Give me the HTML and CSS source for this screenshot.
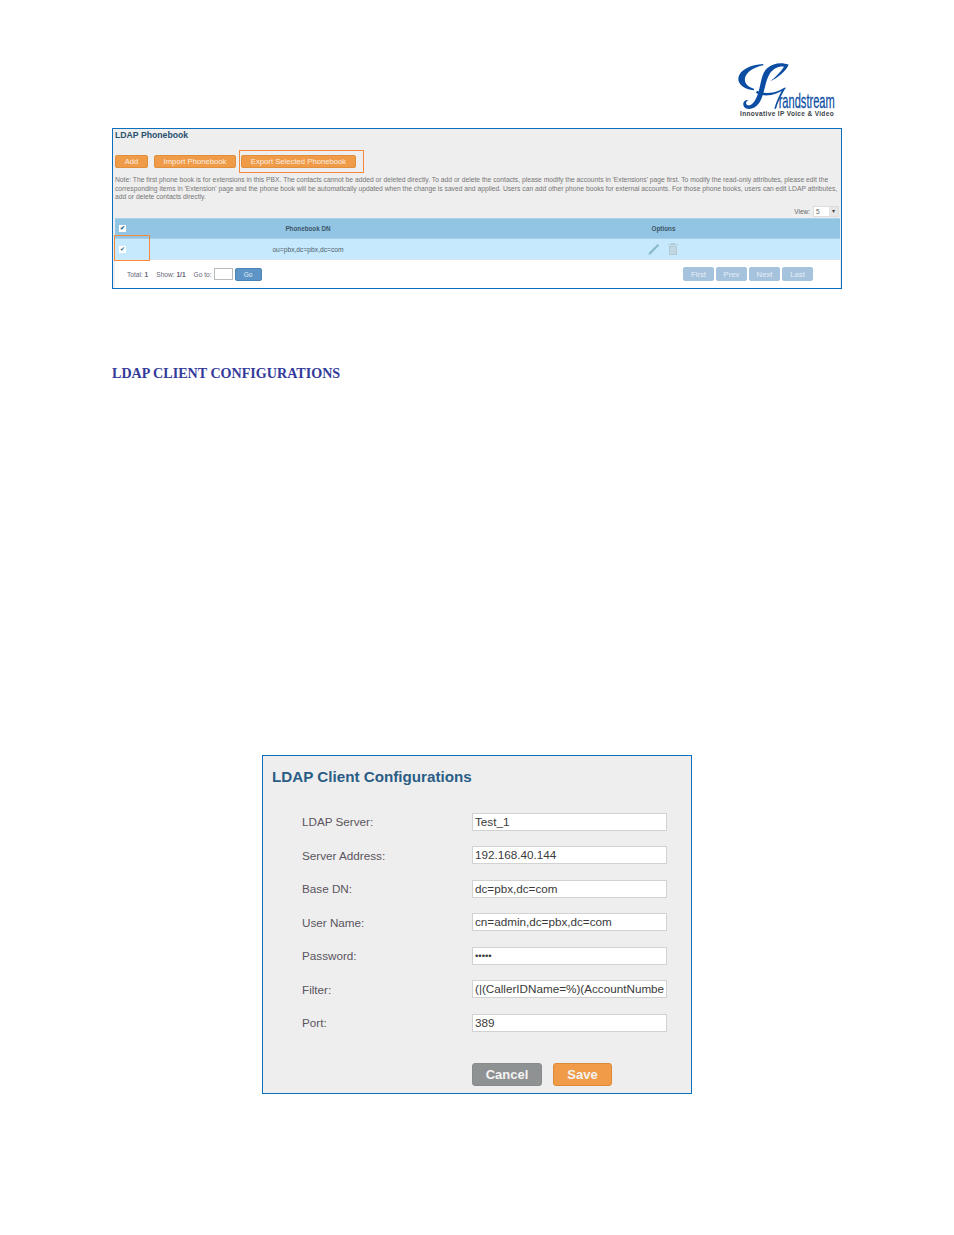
FILE: index.html
```html
<!DOCTYPE html>
<html lang="en">
<head>
<meta charset="utf-8">
<title>LDAP Client Configurations</title>
<link rel="stylesheet" href="styles.css">
</head>
<body>
<header class="top">
  <svg class="logo" viewBox="0 0 390 225" aria-label="Grandstream">
    <g fill="#0b4da2">
      <path d="M130 42C92 44 58 60 55 84C53 104 74 118 102 121L102 116C84 111 72 100 75 84C79 66 102 52 130 46Z"/>
      <path d="M206 44C186 36 160 38 142 54C122 72 124 104 113 134C106 152 96 168 84 166C76 164 76 154 86 150C72 148 66 160 72 170C82 182 104 178 118 158C134 134 134 96 150 70C160 56 176 48 192 50C182 66 166 82 150 94C172 84 196 66 206 44Z"/>
      <path d="M111 122C126 131 154 131 176 122C184 119 190 116 196 112L197 115C186 124 168 134 146 136C130 137 116 134 108 128Z"/>
      <path d="M188 116C178 136 168 156 163 176L168 176C173 156 184 136 196 114Z"/>
    </g>
    <text class="logo-word" transform="translate(176 174) scale(1.04 1.9)">randstream</text>
    <text class="logo-tag" x="60" y="198">Innovative IP Voice &amp; Video</text>
  </svg>
</header>

<section class="book">
  <h2 class="book-title">LDAP Phonebook</h2>
  <div class="book-actions">
    <button class="btn-o btn-add">Add</button>
    <button class="btn-o btn-import">Import Phonebook</button>
    <button class="btn-o btn-export">Export Selected Phonebook</button>
  </div>
  <p class="note">Note: The first phone book is for extensions in this PBX. The contacts cannot be added or deleted directly. To add or delete the contacts, please modify the accounts in 'Extensions' page first. To modify the read-only attributes, please edit the corresponding items in 'Extension' page and the phone book will be automatically updated when the change is saved and applied. Users can add other phone books for external accounts. For those phone books, users can edit LDAP attributes, add or delete contacts directly.</p>
  <div class="view-row">
    <span>View:</span>
    <span class="view-select"><span class="view-val">5</span><span class="view-arrow">▾</span></span>
  </div>
  <div class="tbl">
    <div class="tr th">
      <span class="c-check"><span class="check">✔</span></span>
      <span class="c-dn">Phonebook DN</span>
      <span class="c-opt">Options</span>
    </div>
    <div class="tr td">
      <span class="c-check"><span class="check">✔</span></span>
      <span class="c-dn">ou=pbx,dc=pbx,dc=com</span>
      <span class="c-opt icons">
        <svg class="ico" viewBox="0 0 14 14"><path d="M1.5 12.8L2 10.6L10.6 2L12.2 3.6L3.7 12.2Z" fill="#8dbcc9"/></svg>
        <svg class="ico" viewBox="0 0 14 14"><path d="M2 2.2H12V3.2H2ZM5 1H9V2.2H5ZM3 4H11V13H3Z" fill="#b2c9d3"/><path d="M5 5V12M7 5V12M9 5V12" stroke="#d8ecf5" stroke-width=".8"/></svg>
      </span>
    </div>
  </div>
  <div class="pager">
    <span>Total: <b>1</b></span>
    <span class="pg-show">Show: <b>1/1</b></span>
    <span class="pg-go">Go to:</span>
    <span class="pg-input"></span>
    <button class="btn-go">Go</button>
    <span class="pg-nav">
      <button class="btn-p">First</button>
      <button class="btn-p">Prev</button>
      <button class="btn-p">Next</button>
      <button class="btn-p">Last</button>
    </span>
  </div>
  <div class="mark mark-export"></div>
  <div class="mark mark-check"></div>
</section>

<h1 class="section-head">LDAP CLIENT CONFIGURATIONS</h1>

<section class="client">
  <h2 class="client-title">LDAP Client Configurations</h2>
  <div class="form">
    <label>LDAP Server:</label><input value="Test_1">
    <label>Server Address:</label><input value="192.168.40.144">
    <label>Base DN:</label><input value="dc=pbx,dc=com">
    <label>User Name:</label><input value="cn=admin,dc=pbx,dc=com">
    <label>Password:</label><input class="pw" type="password" value="12345">
    <label>Filter:</label><input value="(|(CallerIDName=%)(AccountNumber=%))">
    <label>Port:</label><input value="389">
  </div>
  <div class="client-actions">
    <button class="btn-l btn-cancel">Cancel</button>
    <button class="btn-l btn-save">Save</button>
  </div>
</section>
</body>
</html>
```
FILE: styles.css
```css
* { box-sizing: border-box; }
html, body { margin: 0; padding: 0; background: #fff; }
body { width: 954px; height: 1235px; overflow: hidden; font-family: "Liberation Sans", Arial, sans-serif; }
button { font-family: inherit; padding: 0; cursor: default; }

.top { height: 128px; display: flex; justify-content: flex-end; align-items: flex-start; padding: 50px 104px 0 0; }
.logo { width: 130px; height: 75px; display: block; }
.logo-word { font-family: "Liberation Sans", sans-serif; font-size: 32px; fill: #0b4da2; stroke: #0b4da2; stroke-width: .4px; }
.logo-tag { font-family: "Liberation Sans", sans-serif; font-size: 19.5px; font-weight: 700; fill: #3a3f48; letter-spacing: 1.05px; }

.book { position: relative; margin-left: 112px; width: 730px; height: 161px; border: 1.3px solid #0a70be; background: #eee; padding: 0 1px 0 2px; display: flex; flex-direction: column; }
.book-title { margin: 0; font-size: 8.7px; line-height: 11px; font-weight: 700; color: #27506f; height: 25px; padding-top: 1px; }
.book-actions { display: flex; gap: 6px; height: 12px; margin-top: 1px; }
.btn-o { height: 13px; border: 1px solid #e08f3c; border-radius: 2px; background: #f09b48; color: #fbeee0; font-size: 7.7px; line-height: 9px; }
.btn-add { width: 33px; }
.btn-import { width: 82px; }
.btn-export { width: 115px; margin-left: -1px; }
.note { margin: 9px 0 0; font-size: 6.72px; line-height: 8.5px; color: #777; height: 26px; width: 727px; word-spacing: .03px; }
.view-row { display: flex; justify-content: flex-end; align-items: center; gap: 3px; height: 12px; margin-top: 3px; padding-right: 1px; font-size: 6.5px; color: #666; }
.view-select { display: flex; width: 26px; height: 11px; background: #fff; border: 1px solid #ddd; }
.view-val { flex: 1; padding-left: 2px; line-height: 9px; }
.view-arrow { width: 9px; background: #e6e6e6; font-size: 6px; line-height: 9px; text-align: center; color: #444; }

.tbl { margin-top: 1px; width: 725px; }
.tr { display: flex; align-items: center; font-size: 6.7px; }
.th { height: 21px; background: #92c5e4; border-top: 1px solid #a9d2ea; border-bottom: 1px solid #a8cfe6; font-weight: 700; font-size: 6.3px; color: #3c5566; }
.td { height: 21px; background: #c7e9fd; border-bottom: 1px solid #d5e8f2; color: #4d5d68; }
.c-check { width: 4px; margin-left: 4px; flex: none; display: flex; }
.check { flex: none; width: 7px; height: 7px; background: #fff; color: #1f5f8e; font-size: 6px; line-height: 7px; text-align: center; }
.c-dn { width: 354px; margin-left: 8px; flex: none; text-align: center; }
.c-opt { width: 357px; flex: none; text-align: center; }
.icons { display: flex; justify-content: center; gap: 5px; }
.ico { width: 14px; height: 14px; display: block; }

.pager { flex: 1; margin: 0 -1px 0 0; width: 725px; background: #fff; display: flex; align-items: center; padding: 0 0 0 12px; font-size: 6.6px; color: #667; }
.pager b { font-weight: 700; }
.pg-show { margin-left: 8px; }
.pg-go { margin-left: 8px; }
.pg-input { width: 19px; height: 12px; margin-left: 2px; border: 1px solid #bbb; background: #fff; }
.btn-go { width: 27px; height: 13px; margin-left: 2px; border: 1px solid #4c86b8; border-radius: 2px; background: #5c95c6; color: #e4eef7; font-size: 6.5px; }
.pg-nav { margin-left: auto; margin-right: 27px; display: flex; gap: 2px; }
.btn-p { width: 31px; height: 14px; border: 1px solid #a6c3de; border-radius: 2px; background: #a6c3de; color: #e6eef6; font-size: 7.7px; }

.mark { position: absolute; border: 1.8px solid #f5893c; }
.mark-export { left: 125.5px; top: 21px; width: 125px; height: 23px; }
.mark-check { left: 1px; top: 105.5px; width: 36px; height: 26px; }

.section-head { margin: 76px 0 0 112px; height: 16px; font-family: "Liberation Serif", serif; font-size: 14.1px; line-height: 16px; font-weight: 700; color: #333a9a; letter-spacing: 0; }

.client { margin: 374px 0 0 262px; width: 430px; height: 339px; border: 1.3px solid #0a70be; background: #eee; padding: 0; }
.client-title { margin: 0; padding: 11px 0 0 9px; height: 49px; font-size: 15.2px; line-height: 19px; font-weight: 700; color: #2a5d85; }
.form { display: grid; grid-template-columns: 170px 195px; grid-auto-rows: 18px; row-gap: 15.5px; padding: 7.5px 0 0 39px; align-items: center; }
.form label { font-size: 11.7px; color: #5a5560; }
.form input { width: 195px; height: 18px; border: 1.3px solid #d2d2d2; background: #fff; padding: 0 2px 1px; margin: 0; font-family: inherit; font-size: 11.7px; color: #3a3a3a; outline: none; border-radius: 0; }
.form .pw { font-size: 9.5px; }
.client-actions { display: flex; gap: 11px; padding: 31.5px 0 0 209px; }
.btn-l { height: 23px; border-radius: 3px; font-size: 13px; font-weight: 700; color: #f4f4f4; }
.btn-cancel { width: 70px; background: #8f9293; border: 1px solid #888b8c; }
.btn-save { width: 59px; background: #f09b48; border: 1px solid #dd8a38; }
```
